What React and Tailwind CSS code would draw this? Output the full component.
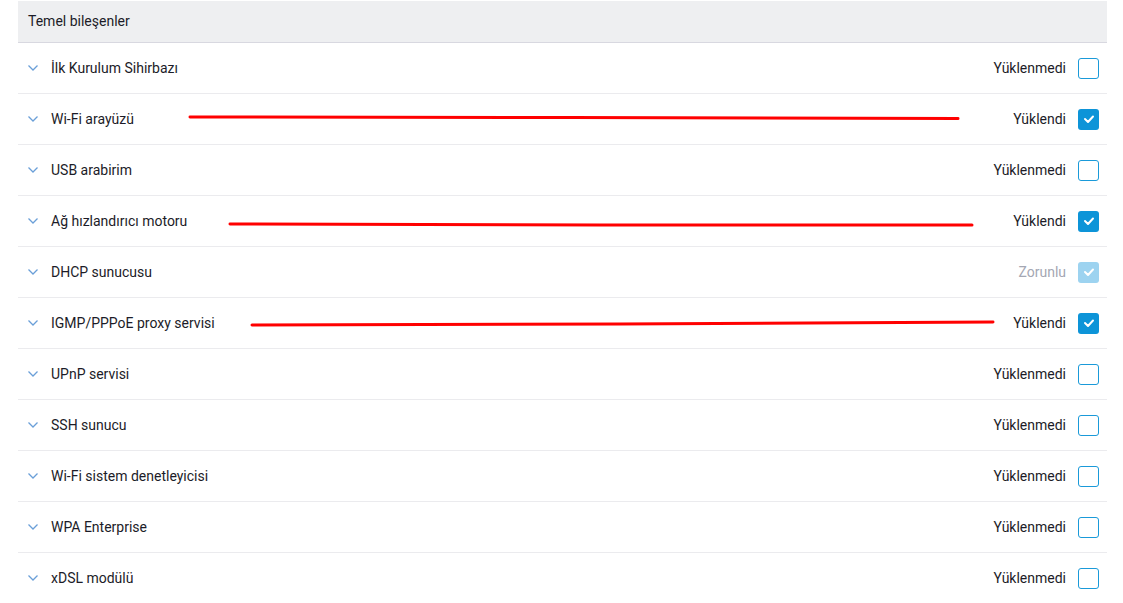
const rows = [
  { name: 'İlk Kurulum Sihirbazı', status: 'Yüklenmedi', state: 'off' },
  { name: 'Wi-Fi arayüzü', status: 'Yüklendi', state: 'on' },
  { name: 'USB arabirim', status: 'Yüklenmedi', state: 'off' },
  { name: 'Ağ hızlandırıcı motoru', status: 'Yüklendi', state: 'on' },
  { name: 'DHCP sunucusu', status: 'Zorunlu', state: 'locked' },
  { name: 'IGMP/PPPoE proxy servisi', status: 'Yüklendi', state: 'on' },
  { name: 'UPnP servisi', status: 'Yüklenmedi', state: 'off' },
  { name: 'SSH sunucu', status: 'Yüklenmedi', state: 'off' },
  { name: 'Wi-Fi sistem denetleyicisi', status: 'Yüklenmedi', state: 'off' },
  { name: 'WPA Enterprise', status: 'Yüklenmedi', state: 'off' },
  { name: 'xDSL modülü', status: 'Yüklenmedi', state: 'off' },
]

function Chevron() {
  return (
    <svg width="12" height="8" viewBox="0 0 12 8" className="shrink-0">
      <path d="M1.5 1.5 L6 6 L10.5 1.5" fill="none" stroke="#6a9fd8" strokeWidth="1.3" />
    </svg>
  )
}

function Box({ state }) {
  if (state === 'off') {
    return <div className="h-[21px] w-[21px] rounded-[3px] border border-[#1a9ad9] bg-white" />
  }
  return (
    <div className={`flex h-[21px] w-[21px] items-center justify-center rounded-[3px] ${state === 'locked' ? 'bg-[#9dd3f0]' : 'bg-[#0d94d8]'}`}>
      <svg width="12" height="10" viewBox="0 0 12 10">
        <path d="M2 5 L5 8 L10 2.5" fill="none" stroke="white" strokeWidth="2" strokeLinecap="round" strokeLinejoin="round" />
      </svg>
    </div>
  )
}

export default function App() {
  return (
    <div className="relative h-[603px] w-[1123px] overflow-hidden bg-white font-['Roboto',sans-serif] text-[14px] text-[#1c1c28]">
      <div className="ml-[18px] mt-[1px] w-[1089px]">
        <div className="flex h-[42px] items-center border-b border-[#d8d8e0] bg-[#eeeff1] pl-[10px]">Temel bileşenler</div>
        {rows.map((row) => (
          <div key={row.name} className="flex h-[51px] items-center border-b border-[#ebebee] pl-[9px] pr-[8px]">
            <Chevron />
            <span className="ml-[12px] flex-1">{row.name}</span>
            <span className={`mr-[12px] ${row.state === 'locked' ? 'text-[#a4a7b3]' : ''}`}>{row.status}</span>
            <Box state={row.state} />
          </div>
        ))}
      </div>
      <svg className="pointer-events-none absolute left-0 top-0" width="1123" height="603">
        <path d="M190 117 L570 117.5 L958 118.5" stroke="#ff0000" strokeWidth="3" fill="none" strokeLinecap="round" />
        <path d="M230 224 L600 225 L972 225" stroke="#ff0000" strokeWidth="3" fill="none" strokeLinecap="round" />
        <path d="M252 325 L620 324 L993 322" stroke="#ff0000" strokeWidth="3" fill="none" strokeLinecap="round" />
      </svg>
    </div>
  )
}
